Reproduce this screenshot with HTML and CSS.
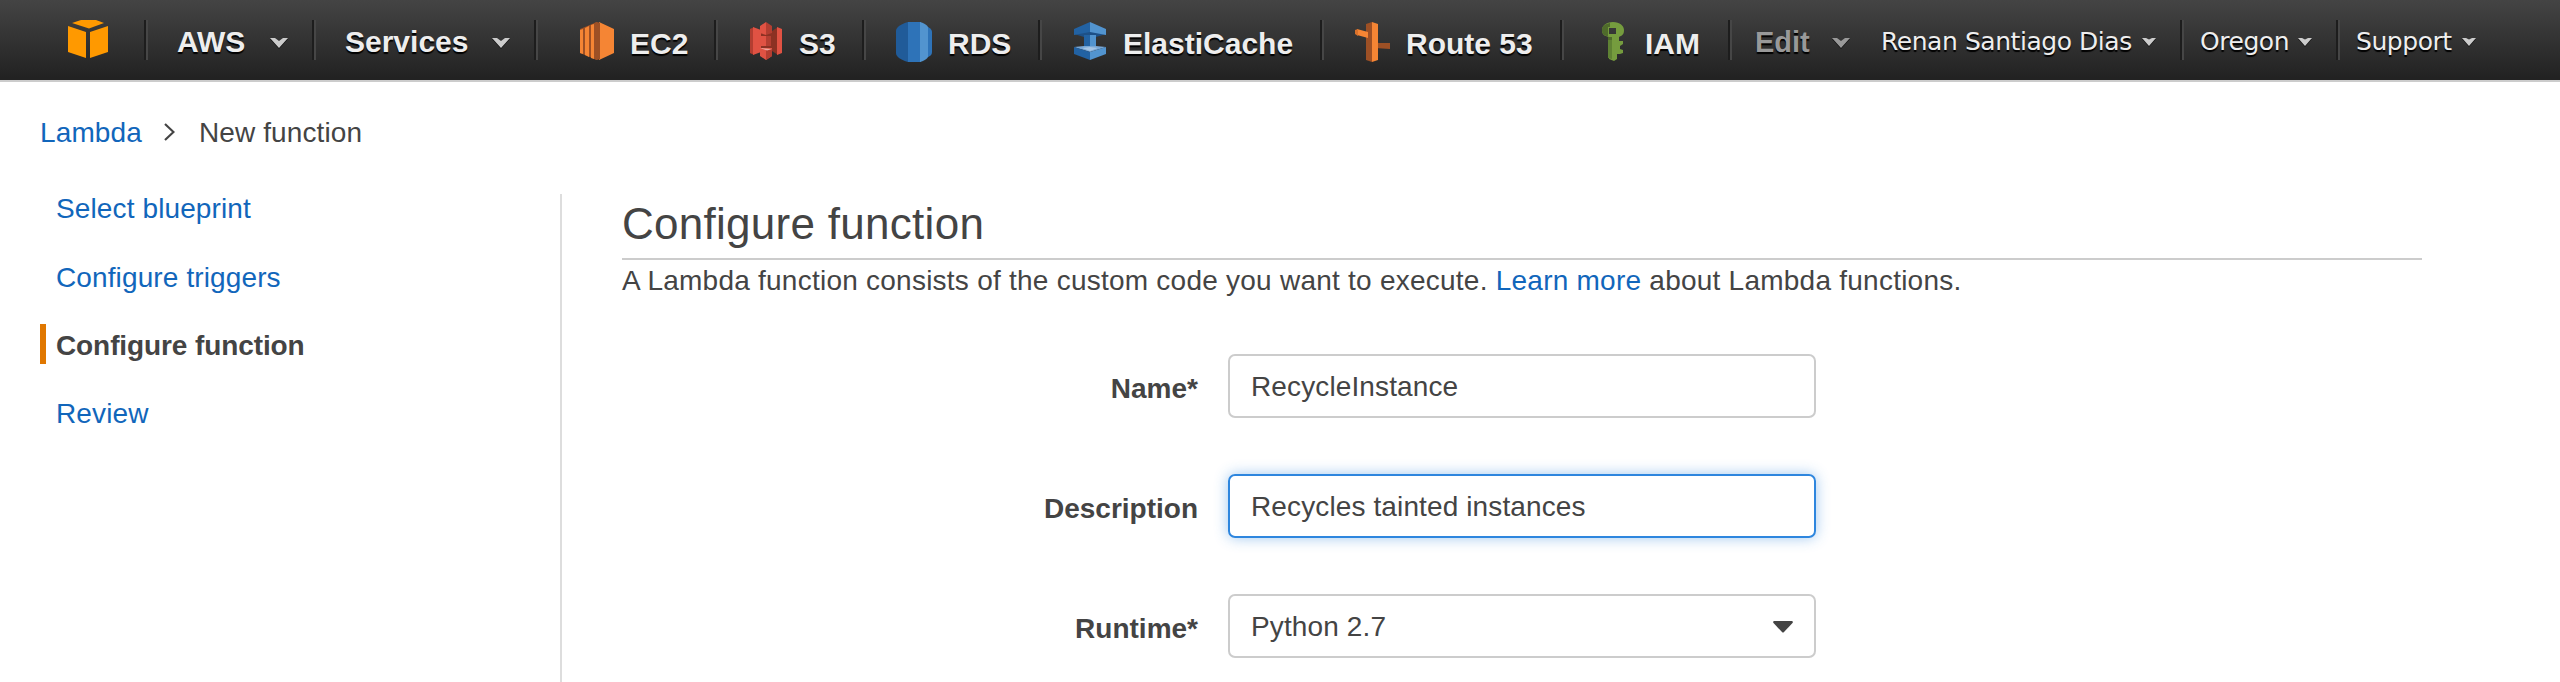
FILE: index.html
```html
<!DOCTYPE html>
<html lang="en">
<head>
<meta charset="utf-8">
<title>Lambda - New function</title>
<link rel="stylesheet" href="styles.css">
</head>
<body>
<header class="nav">
  <a class="cell logo"><svg width="40" height="38" viewBox="0 0 40 38"><g fill="#ff9900"><path d="M13 0h15l8 3-15 5.500L4 3z"/><path d="M0 6l18 6v26L0 32z"/><path d="M40 6l-18 6v26l18-6z"/></g></svg></a>
  <a class="cell aws menu"><span class="label">AWS</span><svg class="caret" width="18" height="10" viewBox="0 0 18 10"><path d="M0 0h5l4 3 4-3h5L9 10z"/></svg></a>
  <a class="cell services menu"><span class="label">Services</span><svg class="caret" width="18" height="10" viewBox="0 0 18 10"><path d="M0 0h5l4 3 4-3h5L9 10z"/></svg></a>
  <a class="cell ec2 svc"><svg width="34" height="40" viewBox="0 0 34 40"><path fill="#9d5025" d="M17 0v38L0 31V7z"/><path fill="#f58534" d="M19 0l15 7v24l-15 7zM0 8l3-1v25l-3-1zM5 6l4-2v31l-4-2zM11 3l3-1v35l-3-1z"/><path fill="#9d5025" d="M14 1l3-1 3 1v36l-3 1-3-1z"/></svg><span class="label">EC2</span></a>
  <a class="cell s3 svc"><svg width="32" height="40" viewBox="0 0 32 40"><path fill="#8c3123" d="M0 7l4-2v28l-4-2zM22 9l6-4v28l-6-4zM10 11h12v16H10z"/><path fill="#e05243" d="M3 5l8 3v22l-8 3zM27 5l5 2v24l-5 2zM11 14h10v10H11zM10 4l6-4v13l-6-2zM10 26h12v8l-6 4-6-4z"/><path fill="#b33e31" d="M16 0l6 4v7l-6 2zM16 28l6-1v7l-6 4zM16 14h5v10h-5zM0 7l3-1v26l-3-1z"/><path fill="#f0a79e" d="M10 26l12 1-5 1.500z"/></svg><span class="label">S3</span></a>
  <a class="cell rds svc"><svg width="36" height="40" viewBox="0 0 36 40"><path fill="#205b99" d="M12 0v40C5 38 0 35 0 31V9c0-4 5-7 12-9z"/><path fill="#2e73b8" d="M12 0h13v40H12z"/><path fill="#5294cf" d="M24 0c7 2 9 5 9 9v22c0 4-2 7-9 9z"/><path fill="#2e73b8" d="M32 5c3 2 4 3 4 5v20c0 2-1 4-4 5z"/></svg><span class="label">RDS</span></a>
  <a class="cell cache svc"><svg width="32" height="40" viewBox="0 0 32 40"><path fill="#1d5087" d="M0 12l16-3 16 3-10 3H10z"/><path fill="#2262a3" d="M16 0v10L0 13V7zM10 13h6v14h-6z"/><path fill="#5294cf" d="M16 0l16 7v6l-16-3zM16 13h6v14h-6z"/><path fill="#78a7d6" d="M0 25l10-1h12l10 1-16 5z"/><path fill="#a5c5e5" d="M8 26l8-1 8 1-8 3z"/><path fill="#2262a3" d="M0 25l16 5v8L0 32z"/><path fill="#5294cf" d="M32 25l-16 5v8l16-6z"/></svg><span class="label">ElastiCache</span></a>
  <a class="cell route svc"><svg width="35" height="40" viewBox="0 0 35 40"><path fill="#9d5025" d="M11 2l6-2v40l-6-2zM20 20l4 1h11v6l-15-1z"/><path fill="#f58534" d="M17 0l6 2v36l-6 2zM2 7l11 3v6L2 13z"/><path fill="#d9712b" d="M0 8l3-1v7l-3-2z"/></svg><span class="label">Route 53</span></a>
  <a class="cell iam svc"><svg width="22" height="40" viewBox="0 0 22 40"><path fill="#759c3e" fill-rule="evenodd" d="M11 0c7 0 11 4 11 8s-1 5-5 7v4h4v3l-3 2v3l3 1v3l-3 1h-3v5l-3 2-5-2V15C2 14 0 12 0 8s4-8 11-8zM7 6v6h7V6z"/><path fill="#4f6b2b" d="M8 1v4H6v9H4C2 13 0 12 0 8s3-6 8-7zM6 15h4v3H6z"/><path fill="#5f8234" d="M6 18h4v19l-4-1z"/></svg><span class="label">IAM</span></a>
  <a class="cell edit menu"><span class="label">Edit</span><svg class="caret" width="18" height="10" viewBox="0 0 18 10"><path d="M0 0h5l4 3 4-3h5L9 10z"/></svg></a>
  <a class="cell user acct"><span class="label">Renan Santiago Dias</span><svg class="caret" width="14" height="8" viewBox="0 0 14 8"><path d="M0 0h4l3 1.500 3-1.500h4L7 8z"/></svg></a>
  <a class="cell region acct"><span class="label">Oregon</span><svg class="caret" width="14" height="8" viewBox="0 0 14 8"><path d="M0 0h4l3 1.500 3-1.500h4L7 8z"/></svg></a>
  <a class="cell support acct"><span class="label">Support</span><svg class="caret" width="14" height="8" viewBox="0 0 14 8"><path d="M0 0h4l3 1.500 3-1.500h4L7 8z"/></svg></a>
</header>
<nav class="crumbs"><a class="link">Lambda</a><svg width="11" height="18" viewBox="0 0 11 18"><path d="M1 1l8.500 8L1 17" fill="none" stroke="#444" stroke-width="2.200"/></svg><span>New function</span></nav>
<div class="page">
  <aside class="steps">
    <a class="step link">Select blueprint</a>
    <a class="step link">Configure triggers</a>
    <a class="step current">Configure function</a>
    <a class="step link">Review</a>
  </aside>
  <main class="content">
    <h1 class="title">Configure function</h1>
    <p class="intro">A Lambda function consists of the custom code you want to execute. <a class="link">Learn more</a> about Lambda functions.</p>
    <form class="form">
      <label class="name">Name*</label><div class="field">RecycleInstance</div>
      <label class="name">Description</label><div class="field focus">Recycles tainted instances</div>
      <label class="name">Runtime*</label><div class="field select"><span>Python 2.7</span><svg width="20" height="12" viewBox="0 0 20 12"><path fill="#444" d="M1 0h18q1.500.500.500 2L11 11q-1 1-2 0L.500 2Q-.500.500 1 0z"/></svg></div>
    </form>
  </main>
</div>
</body>
</html>
```

FILE: styles.css
```css
* { box-sizing: border-box; }
body {
  margin: 0;
  height: 682px;
  overflow: hidden;
  display: flex;
  flex-direction: column;
  background: #fff;
  color: #444;
  font: 28px/40px "Liberation Sans", Arial, sans-serif;
  letter-spacing: .12px;
}
.link { color: #1166bb; }

.nav {
  flex: none;
  height: 82px;
  padding-top: 20px;
  display: flex;
  background: linear-gradient(#444, #222 78px, #222) top / 100% 80px no-repeat;
  border-bottom: 2px solid #ccc;
  color: #eee;
  letter-spacing: 0;
}
.cell {
  flex: none;
  height: 40px;
  display: flex;
  align-items: flex-start;
  white-space: nowrap;
  border-right: 2px solid #464646;
  box-shadow: inset -2px 0 #1d1d1d;
}
.label {
  flex: 1;
  font-size: 30px;
  font-weight: bold;
  text-shadow: 0 2px 1px #000;
}
.caret { margin-top: 18px; fill: #ccc; filter: drop-shadow(0 1px 0 #111); }
.menu .label { line-height: 44px; }
.svc .label { line-height: 48px; }
.svc svg { margin-top: 2px; flex: none; }
.logo { width: 148px; padding-left: 68px; }
.aws { width: 168px; padding: 0 26px 0 29px; }
.services { width: 222px; padding: 0 26px 0 29px; }
.ec2 { width: 180px; padding-left: 42px; gap: 16px; }
.s3 { width: 148px; padding-left: 32px; gap: 17px; }
.rds { width: 176px; padding-left: 30px; gap: 16px; }
.cache { width: 282px; padding-left: 32px; gap: 17px; }
.route { width: 240px; padding-left: 31px; gap: 16px; }
.iam { width: 168px; padding-left: 38px; gap: 21px; }
.edit { width: 130px; padding: 0 12px 0 23px; border: 0; box-shadow: none; }
.edit .label { font-size: 29px; color: #999; }
.edit .caret { fill: #999; }
.acct .label { font: 25px/43px "DejaVu Sans", Verdana, sans-serif; letter-spacing: -.45px; }
.user { width: 322px; padding: 0 26px 0 19px; }
.region { width: 156px; padding: 0 26px 0 16px; }
.support { width: 140px; padding: 0 4px 0 16px; border: 0; box-shadow: none; }

.crumbs {
  flex: none;
  height: 112px;
  padding: 31px 0 0 40px;
  display: flex;
}
.crumbs svg { margin: 10px 24px 0 22px; }

.page { flex: 1; display: flex; min-height: 0; }
.steps {
  width: 562px;
  padding-left: 40px;
  border-right: 2px solid #ddd;
  display: flex;
  flex-direction: column;
  gap: 28px;
}
.step {
  height: 40px;
  line-height: 42px;
  padding-left: 10px;
  border-left: 6px solid transparent;
  transform: translateY(-6px);
}
.step:nth-child(n+2) { line-height: 43px; }
.current { font-weight: bold; letter-spacing: -.1px; border-left-color: #e07700; }
.content { width: 1860px; padding-left: 60px; }
.title {
  height: 66px;
  margin: 0;
  border-bottom: 2px solid #ccc;
  font-size: 44px;
  font-weight: normal;
  line-height: 60px;
  letter-spacing: .28px;
}
.intro { margin: 0; height: 94px; line-height: 42px; letter-spacing: .24px; }
.form {
  display: grid;
  grid-template-columns: 576px 588px;
  column-gap: 30px;
  row-gap: 56px;
}
.name { height: 64px; text-align: right; font-weight: bold; line-height: 69px; letter-spacing: 0; }
.field {
  height: 64px;
  padding: 0 21px;
  border: 2px solid #ccc;
  border-radius: 7px;
  line-height: 62px;
}
.focus { border-color: #2e86de; box-shadow: 0 0 14px rgba(46, 134, 222, .45); }
.select { display: flex; justify-content: space-between; }
.select svg { margin-top: 25px; }
```
